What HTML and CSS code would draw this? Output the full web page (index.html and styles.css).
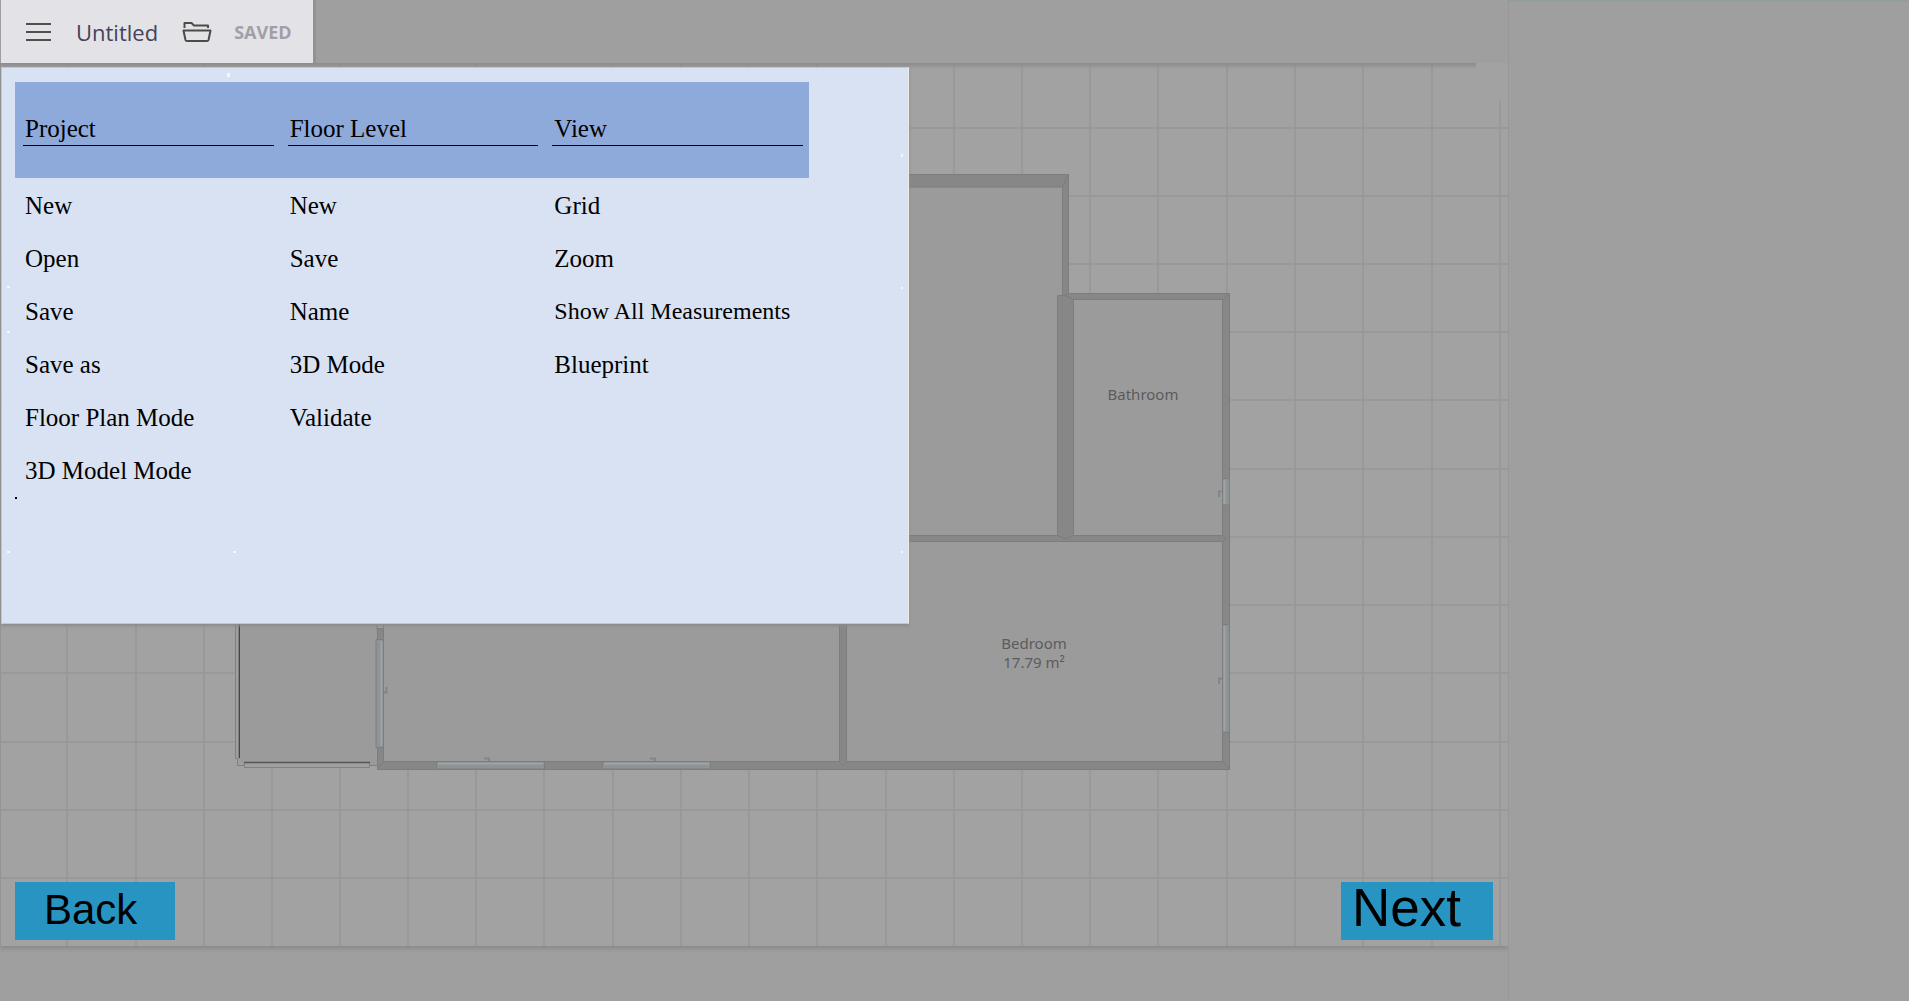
FILE: index.html
```html
<!DOCTYPE html>
<html lang="en">
<head>
<meta charset="utf-8">
<meta name="viewport" content="width=device-width, initial-scale=1">
<title>Untitled</title>
<link rel="stylesheet" href="styles.css">
</head>
<body>
<div class="app">
  <main class="workspace">
    <header class="topbar">
      <div class="toolbar">
        <button class="icon-button" type="button" aria-label="Menu" aria-expanded="true">
          <svg width="25" height="20" viewBox="0 0 25 20" aria-hidden="true"><path d="M0 2h25M0 10h25M0 18h25" stroke="#4f504e" stroke-width="2"/></svg>
        </button>
        <h1 class="title">Untitled</h1>
        <button class="icon-button" type="button" aria-label="Open folder">
          <svg width="30" height="22" viewBox="0 0 30 22" fill="none" stroke="#4a4c49" stroke-width="2" stroke-linejoin="round" aria-hidden="true"><path d="M2.500 7V2h7l2.500 2.500h14V7M1.500 9.500h27l-2 9.500q-.3 1-1.500 1H5q-1.200 0-1.500-1z"/></svg>
        </button>
        <span class="status">SAVED</span>
      </div>
      <nav class="menu" aria-label="Main menu">
        <div class="menu-columns">
          <section>
            <h2><span>Project</span></h2>
            <ul>
              <li><button type="button">New</button></li>
              <li><button type="button">Open</button></li>
              <li><button type="button">Save</button></li>
              <li><button type="button">Save as</button></li>
              <li><button type="button">Floor Plan Mode</button></li>
              <li><button type="button">3D Model Mode</button></li>
            </ul>
          </section>
          <section>
            <h2><span>Floor Level</span></h2>
            <ul>
              <li><button type="button">New</button></li>
              <li><button type="button">Save</button></li>
              <li><button type="button">Name</button></li>
              <li><button type="button">3D Mode</button></li>
              <li><button type="button">Validate</button></li>
            </ul>
          </section>
          <section>
            <h2><span>View</span></h2>
            <ul>
              <li><button type="button">Grid</button></li>
              <li><button type="button">Zoom</button></li>
              <li><button class="long" type="button">Show All Measurements</button></li>
              <li><button type="button">Blueprint</button></li>
            </ul>
          </section>
        </div>
        <svg class="specks" viewBox="0 0 908 556" width="908" height="556" aria-hidden="true">
          <path fill="#f8f6f2" d="M226 5h3v4h-3zM900 86h2v3h-2zM900 219h2v2h-2zM6 218h3v2h-3zM6 263h3v2h-3zM6 483h3v2h-3zM232 483h3v2h-3zM900 483h2v2h-2z"/>
          <path fill="#000" d="M14 429h2v2h-2z"/>
        </svg>
      </nav>
    </header>

    <div class="canvas">
      <svg class="plan" viewBox="0 63 1508 883" preserveAspectRatio="xMinYMin slice" role="img" aria-label="Floor plan">
        <path class="grid" d="M67 63V946M136 63V946M204 63V946M272 63V946M340 63V946M408 63V946M476 63V946M544 63V946M613 63V946M681 63V946M749 63V946M817 63V946M886 63V946M954 63V946M1022 63V946M1090 63V946M1158 63V946M1227 63V946M1295 63V946M1363 63V946M1432 63V946M1500 101V946M0 128H1508M0 196H1508M0 264H1508M0 332H1508M0 400H1508M0 469H1508M0 537H1508M0 605H1508M0 673H1508M0 742H1508M0 810H1508M0 878H1508"/>
        <path class="room" d="M239 600H378V765H239zM380 600H842V763H380zM844 540H1224V763H844zM1070 297H1224V538H1070zM880 184H1064V538H880z"/>
        <g class="wall">
          <path d="M880 174.500H1068.500L1062.500 187H880z"/>
          <path d="M1068.500 174.500V293.500L1062.500 296V187z"/>
          <path d="M1068.500 293.500H1229.500L1222.500 299.500H1073.500L1065 296z"/>
          <path d="M1229.500 293.500V769.500L1222.500 761.500V299.500z"/>
          <path d="M1057.500 295.500H1065L1073.500 299.500V535.500L1065 539L1057.500 535.500z"/>
          <path d="M880 535.500H1057.500L1065 539L1073.500 535.500H1222.500L1226 538.500L1222.500 541.500H880z"/>
          <path d="M377.500 600H383.500V761.500L377.500 769.500z"/>
          <path d="M383.500 761.500H1222.500L1229.500 769.500H377.500z"/>
          <path d="M839.500 600H846.500V762L843 766L839.500 762z"/>
        </g>
        <path class="rail" d="M377.500 620.500H383.500V628.500H376.500zM235.500 600H238.500V758.500H235.500zM237.500 759V765.500H244M370 765.500H377M244.500 762.500H369.500V767.500H244.500z"/>
        <path d="M239.500 600V758" stroke="#454545"/>
        <path d="M244 762.500H370" stroke="#555" stroke-width="1.500"/>
        <g class="window">
          <path d="M376 639.500H383V747.500H376zM436.500 762H544.500V769H436.500zM602.500 762H710.500V769H602.500zM1222.500 624.500H1229.500V732.500H1222.500zM1222.500 478.500H1229.500V505H1222.500z"/>
        </g>
        <path class="glass-light" d="M381.500 641V746M438 763.500H543M604 763.500H709M1224.500 626V731M1224.500 480V504"/>
        <path class="handle" d="M386.500 687V692.500H384M484 758.500H489V761M650 758.500H655V761M1222 678.500H1219V684M1222 491.500H1219V497"/>
        <g class="room-label">
          <text x="1143" y="400">Bathroom</text>
          <text x="1034" y="649">Bedroom</text>
          <text x="1034" y="668">17.79 m²</text>
        </g>
      </svg>
      <div class="corner"></div>
      <div class="actions">
        <button class="step back" type="button">Back</button>
        <button class="step next" type="button">Next</button>
      </div>
    </div>
    <footer class="bottom"></footer>
  </main>
  <aside class="side" aria-label="Properties"></aside>
</div>
</body>
</html>
```
FILE: styles.css
```css
* {
  box-sizing: border-box;
}

body {
  margin: 0;
  background: #9f9f9f;
}

button {
  border: 0;
  padding: 0;
  background: none;
  cursor: pointer;
}

.app {
  display: grid;
  grid-template-columns: minmax(0, 1fr) 401px;
  min-height: 100vh;
}

.workspace {
  display: grid;
  grid-template-rows: 63px 1fr 55px;
}

.topbar {
  position: relative;
  z-index: 2;
  padding-left: 1px;
  background: #9f9f9f;
}

.toolbar {
  display: inline-flex;
  align-items: center;
  height: 63px;
  padding: 0 21px 0 25px;
  background: #e3e2e7;
  box-shadow: 3px 0 0 #929292;
}

.icon-button {
  display: flex;
}

.title {
  margin: 0 24px 0 25px;
  font: 400 22px/32px "Open Sans", sans-serif;
  color: #45435a;
}

.status {
  margin-left: 22px;
  font: 700 18px/24px "Open Sans", sans-serif;
  color: #a09fa7;
}

.menu {
  position: absolute;
  top: 67px;
  left: 1px;
  width: 908px;
  min-height: 557px;
  padding: 14px;
  border: 1px solid #c3c6ca;
  border-right-color: #ecebe6;
  background: #d9e2f3;
  box-shadow: 0 2px 3px #8b8c88;
}

.menu-columns {
  display: grid;
  grid-template-columns: repeat(3, 1fr);
  width: 794px;
  margin-left: -1px;
  font-family: "Liberation Serif", serif;
  font-size: 25px;
}

.menu h2 {
  height: 96px;
  margin: 0;
  padding: 30px 6px 0 8px;
  background: #8eaadb;
  font: inherit;
}

.menu h2 span {
  display: block;
  padding-left: 2px;
  border-bottom: 1px solid #000;
  line-height: 33px;
}

.menu ul {
  margin: 0;
  padding: 1px 0 0 10px;
  list-style: none;
}

.menu li button {
  display: block;
  width: 100%;
  font: inherit;
  line-height: 53px;
  color: #000;
  text-align: left;
}

.menu li .long {
  font-size: 24px;
}

.specks {
  position: absolute;
  top: 0;
  left: -1px;
  pointer-events: none;
}

.canvas {
  position: relative;
  display: flex;
  flex-direction: column;
  justify-content: flex-end;
  background: #a2a2a2;
  box-shadow: 0 2px 5px #858585;
}

.canvas::before {
  content: "";
  position: absolute;
  z-index: 1;
  top: 0;
  left: 0;
  right: 32px;
  height: 6px;
  background: linear-gradient(#8b8b8b, #a2a2a200);
}

.plan {
  position: absolute;
  inset: 0;
  width: 100%;
  height: 100%;
  box-shadow: inset 1px 0 0 #939393;
}

.grid {
  fill: none;
  stroke: #979797;
  stroke-width: 1.5;
}

.room {
  fill: #9b9b9b;
}

.wall {
  fill: #878787;
  stroke: #7d7d7d;
}

.rail {
  fill: #a0a0a0;
  stroke: #808080;
}

.window {
  fill: #8d9496;
  stroke: #7c7f80;
}

.glass-light {
  stroke: #a0a3a3;
  stroke-width: 2;
}

.handle {
  fill: none;
  stroke: #858585;
  stroke-width: 2;
}

.room-label {
  font: 15px "Noto Sans", sans-serif;
  fill: #5b5b5b;
  text-anchor: middle;
}

.corner {
  position: absolute;
  top: 0;
  right: 0;
  width: 32px;
  height: 38px;
  background: #a2a2a2;
}

.actions {
  position: relative;
  display: flex;
  justify-content: space-between;
  padding: 0 15px 6px;
}

.step {
  height: 58px;
  background: #2894c2;
  font-family: "Liberation Sans", sans-serif;
  color: #000;
  text-align: left;
}

.back {
  width: 160px;
  padding: 0 0 2px 29px;
  font-size: 42px;
  line-height: 56px;
}

.next {
  width: 152px;
  padding: 0 0 6px 11px;
  font-size: 53px;
  line-height: 52px;
}

.side {
  position: relative;
  z-index: 1;
  border-top: 2px solid #949d9d;
  border-left: 1px solid #979797;
  background: #9f9f9f;
}
```
